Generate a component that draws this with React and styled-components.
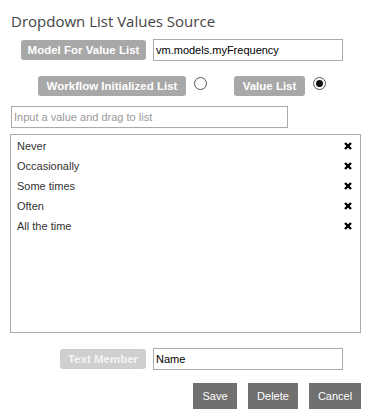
import React from 'react';
import styled, { createGlobalStyle } from 'styled-components';

const GlobalStyle = createGlobalStyle`
  body {
    margin: 0;
    background: #fff;
    font-family: 'Liberation Sans', Arial, sans-serif;
  }
`;

const items = ['Never', 'Occasionally', 'Some times', 'Often', 'All the time'];

export default function App() {
  return (
    <>
      <GlobalStyle />
      <Panel>
        <Title>Dropdown List Values Source</Title>
        <FieldRow>
          <Tag $w={125}>Model For Value List</Tag>
          <TextBox defaultValue="vm.models.myFrequency" />
        </FieldRow>
        <ChoiceRow>
          <Tag $w={148}>Workflow Initialized List</Tag>
          <Radio type="radio" name="src" />
          <Tag $w={71} style={{ marginLeft: 27 }}>Value List</Tag>
          <Radio type="radio" name="src" defaultChecked />
        </ChoiceRow>
        <NewValue placeholder="Input a value and drag to list" />
        <ListBox>
          {items.map((it) => (
            <Item key={it}>
              <span>{it}</span>
              <Remove viewBox="0 0 8 8">
                <path d="M1 1 L7 7 M7 1 L1 7" />
              </Remove>
            </Item>
          ))}
        </ListBox>
        <FieldRow $top={15}>
          <Tag $w={86} $light>Text Member</Tag>
          <TextBox defaultValue="Name" />
        </FieldRow>
        <Actions>
          <Btn $w={44}>Save</Btn>
          <Btn $w={50}>Delete</Btn>
          <Btn $w={52}>Cancel</Btn>
        </Actions>
      </Panel>
    </>
  );
}

const Panel = styled.div`
  width: 369px;
  padding-top: 11px;
  box-sizing: border-box;
`;

const Title = styled.div`
  font-family: 'Open Sans', sans-serif;
  font-size: 15px;
  line-height: 20px;
  color: #444;
  padding-left: 11px;
`;

const FieldRow = styled.div`
  display: flex;
  align-items: center;
  justify-content: flex-end;
  gap: 7px;
  margin-top: ${(p) => p.$top ?? 8}px;
  padding-right: 26px;
  height: 22px;
`;

const Tag = styled.div`
  width: ${(p) => p.$w}px;
  height: 20px;
  line-height: 20px;
  box-sizing: border-box;
  text-align: center;
  border-radius: 3px;
  background: ${(p) => (p.$light ? '#cfcfcf' : '#a8a8a8')};
  color: ${(p) => (p.$light ? '#f4f4f4' : '#fff')};
  font-size: 11.5px;
  font-weight: bold;
  white-space: nowrap;
  flex: none;
`;

const TextBox = styled.input`
  width: 190px;
  height: 22px;
  box-sizing: border-box;
  border: 1px solid #aaa;
  padding: 0 2px;
  font-family: 'Liberation Sans', Arial, sans-serif;
  font-size: 11px;
  color: #000;
  outline: none;
`;

const ChoiceRow = styled.div`
  display: flex;
  align-items: flex-start;
  height: 20px;
  margin-top: 15px;
  padding-left: 38px;
`;

const Radio = styled.input`
  appearance: none;
  width: 13px;
  height: 13px;
  margin: 1px 0 0 8px;
  border: 1px solid #555;
  border-radius: 50%;
  background: #fff;
  box-sizing: border-box;
  position: relative;
  &:checked::after {
    content: '';
    position: absolute;
    left: 2px;
    top: 2px;
    width: 7px;
    height: 7px;
    border-radius: 50%;
    background: #111;
  }
`;

const NewValue = styled.input`
  display: block;
  margin: 10px 0 0 11px;
  width: 277px;
  height: 22px;
  box-sizing: border-box;
  border: 1px solid #aaa;
  padding: 0 2px;
  font-family: 'Liberation Sans', Arial, sans-serif;
  font-size: 11px;
  outline: none;
  &::placeholder {
    color: #999;
  }
`;

const ListBox = styled.div`
  margin: 6px 0 0 10px;
  width: 351px;
  height: 199px;
  box-sizing: border-box;
  border: 1px solid #aaa;
  padding-top: 1px;
`;

const Item = styled.div`
  display: flex;
  align-items: center;
  justify-content: space-between;
  height: 20px;
  padding: 0 8px 0 6px;
  font-size: 11px;
  color: #333;
`;

const Remove = styled.svg`
  width: 8px;
  height: 8px;
  path {
    stroke: #000;
    stroke-width: 2.4;
    fill: none;
  }
`;

const Actions = styled.div`
  display: flex;
  justify-content: flex-end;
  gap: 11px;
  margin-top: 13px;
  padding-right: 8px;
`;

const Btn = styled.button`
  width: ${(p) => p.$w}px;
  height: 26px;
  border: none;
  background: #707070;
  color: #fff;
  font-family: 'Liberation Sans', Arial, sans-serif;
  font-size: 11px;
  padding: 0;
`;
